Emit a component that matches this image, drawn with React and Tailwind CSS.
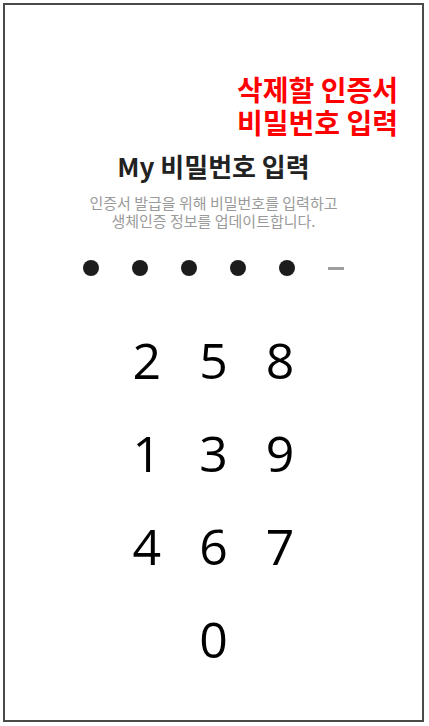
import React, { useState } from 'react';

const KEYS = ['2', '5', '8', '1', '3', '9', '4', '6', '7'];
const PIN_LENGTH = 6;

export default function App() {
    const [pin, setPin] = useState('12345');

    const press = (key) => {
        setPin(prev => (prev.length < PIN_LENGTH ? prev + key : prev));
    };

    return (
        <div className="w-[429px] h-[726px] bg-white pt-[3px] pl-[3px]">
            <div className="w-[421px] h-[719px] border-2 border-[#4a4a4a] flex flex-col items-center font-['Noto_Sans_CJK_KR','Noto_Sans',sans-serif]">
                {/* red label, top right */}
                <div className="self-end mt-[68px] mr-[24px] text-right text-[28px] leading-[33px] font-bold text-[#ff0000]">
                    삭제할 인증서<br />비밀번호 입력
                </div>

                <h2 className="mt-[10px] text-[26px] leading-[34px] font-semibold text-[#222]">
                    My 비밀번호 입력
                </h2>
                <p className="mt-[11px] text-center text-[15px] leading-[18px] text-[#9a9a9a]">
                    인증서 발급을 위해 비밀번호를 입력하고<br />생체인증 정보를 업데이트합니다.
                </p>

                {/* entered digits */}
                <div className="mt-[30px] flex items-center gap-[33px] h-[16px]">
                    {Array.from({ length: PIN_LENGTH }).map((_, i) =>
                        i < pin.length ? (
                            <span key={i} className="w-[16px] h-[16px] rounded-full bg-[#1c1c1c]" />
                        ) : (
                            <span key={i} className="w-[16px] h-[3px] bg-[#9e9e9e]" />
                        )
                    )}
                </div>

                {/* shuffled keypad */}
                <div className="mt-[38px] grid grid-cols-3 w-[200px] font-['Open_Sans',sans-serif] text-[50px] leading-[93px] text-black">
                    {KEYS.map(k => (
                        <button key={k} type="button" onClick={() => press(k)} className="h-[93px] text-center">
                            {k}
                        </button>
                    ))}
                    <span />
                    <button type="button" onClick={() => press('0')} className="h-[93px] text-center">
                        0
                    </button>
                    <span />
                </div>
            </div>
        </div>
    );
}
